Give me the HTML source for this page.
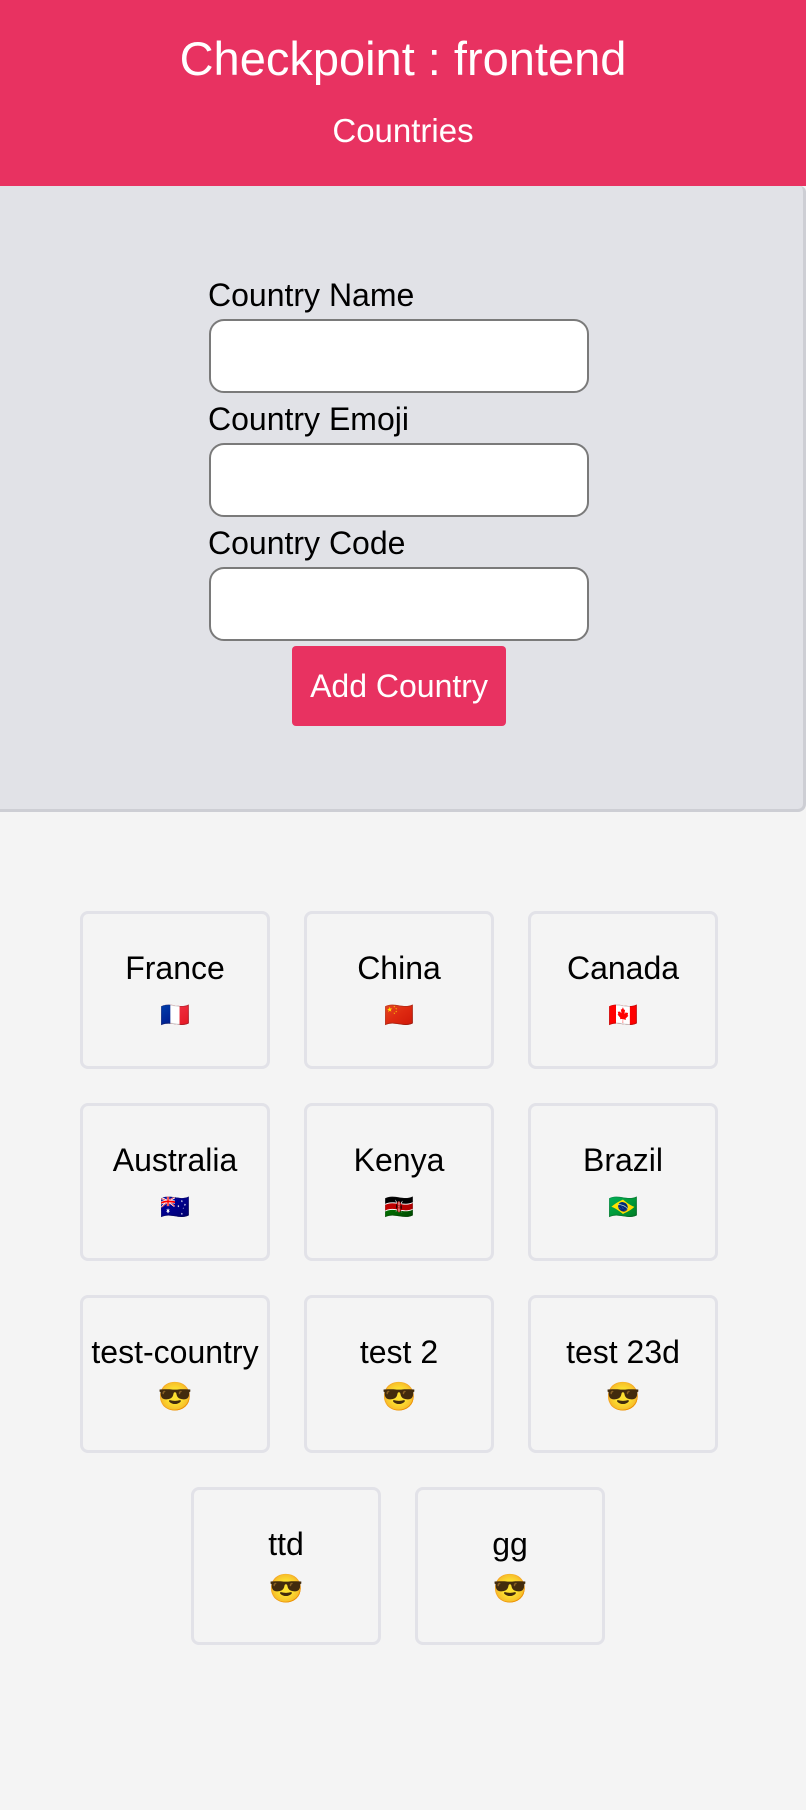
<!DOCTYPE html>
<html><head><meta charset="utf-8"><style>
body{margin:0;background:#f4f4f4;font-family:"Liberation Sans","DejaVu Sans",sans-serif;width:806px;height:1810px;overflow:hidden;position:relative}
.hdr{position:absolute;left:0;top:0;width:806px;height:186px;background:#e83261;color:#fff;text-align:center}
.hdr h1{position:absolute;left:0;right:0;top:31px;margin:0;font-weight:normal;font-size:47px;line-height:56px}
.hdr h2{position:absolute;left:0;right:0;top:111px;margin:0;font-weight:normal;font-size:33px;line-height:40px}
.panel{position:absolute;left:-10px;top:186px;width:810px;height:623px;background:#e1e2e7;border:3px solid #cdced4;border-top:none;border-radius:0 6px 8px 0;box-sizing:content-box}
.lbl{position:absolute;left:208px;font-size:32px;color:#000;line-height:36px}
.inp{position:absolute;left:209px;width:380px;height:74px;box-sizing:border-box;background:#fff;border:2px solid #7a7a7a;border-radius:15px}
.btn{position:absolute;left:292px;top:646px;width:214px;height:80px;background:#e83261;border-radius:4px;color:#fff;font-size:32px;text-align:center;line-height:80px}
.card{position:absolute;width:190px;height:158px;box-sizing:border-box;border:3px solid #e2e2e8;border-radius:8px;text-align:center}
.card .n{position:absolute;left:-10px;right:-10px;top:35px;font-size:32px;line-height:38px;color:#000;white-space:nowrap}
.card .e{position:absolute;left:0;right:0;top:86px;font-size:24px;line-height:30px;font-family:"Noto Color Emoji","DejaVu Sans",sans-serif}
.card .s{font-size:28px;top:84px}
</style></head><body>
<div class="hdr"><h1>Checkpoint : frontend</h1><h2>Countries</h2></div>
<div class="panel"></div>
<div class="lbl" style="top:277px">Country Name</div>
<div class="inp" style="top:319px"></div>
<div class="lbl" style="top:401px">Country Emoji</div>
<div class="inp" style="top:443px"></div>
<div class="lbl" style="top:525px">Country Code</div>
<div class="inp" style="top:567px"></div>
<div class="btn">Add Country</div>

<div class="card" style="left:80px;top:911px"><div class="n">France</div><div class="e">🇫🇷</div></div>
<div class="card" style="left:304px;top:911px"><div class="n">China</div><div class="e">🇨🇳</div></div>
<div class="card" style="left:528px;top:911px"><div class="n">Canada</div><div class="e">🇨🇦</div></div>
<div class="card" style="left:80px;top:1103px"><div class="n">Australia</div><div class="e">🇦🇺</div></div>
<div class="card" style="left:304px;top:1103px"><div class="n">Kenya</div><div class="e">🇰🇪</div></div>
<div class="card" style="left:528px;top:1103px"><div class="n">Brazil</div><div class="e">🇧🇷</div></div>
<div class="card" style="left:80px;top:1295px"><div class="n">test-country</div><div class="e s">😎</div></div>
<div class="card" style="left:304px;top:1295px"><div class="n">test 2</div><div class="e s">😎</div></div>
<div class="card" style="left:528px;top:1295px"><div class="n">test 23d</div><div class="e s">😎</div></div>
<div class="card" style="left:191px;top:1487px"><div class="n">ttd</div><div class="e s">😎</div></div>
<div class="card" style="left:415px;top:1487px"><div class="n">gg</div><div class="e s">😎</div></div>
</body></html>
